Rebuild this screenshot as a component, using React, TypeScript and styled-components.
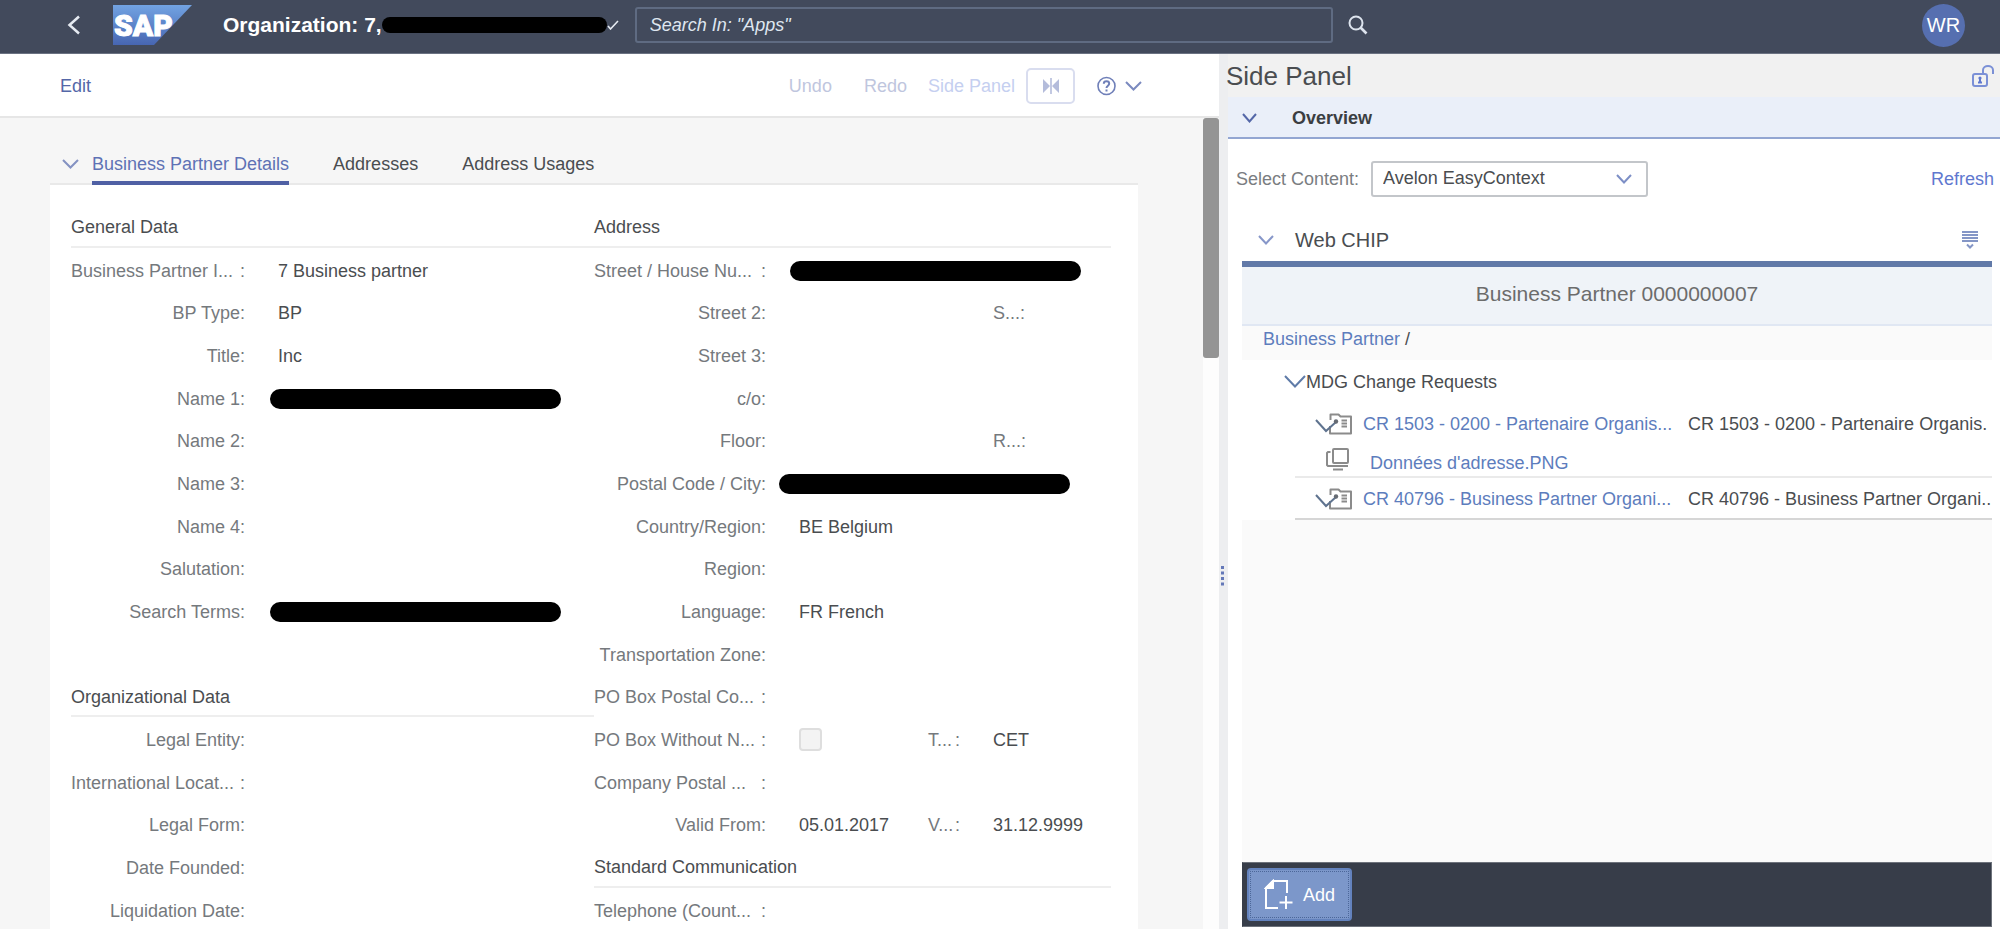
import React from "react";
import styled, { createGlobalStyle } from "styled-components";

const GlobalStyle = createGlobalStyle`
  * { box-sizing: border-box; }
  body {
    margin: 0;
    background: #ffffff;
    color: #4a4d50;
    font-family: "Liberation Sans", Arial, sans-serif;
    font-size: 18px;
    line-height: 22px;
  }
  button, input, select { font: inherit; color: inherit; }
  button { border: 0; padding: 0; background: none; cursor: pointer; }
  h1, h2, h3, p, ul { margin: 0; padding: 0; font-weight: 400; font-size: 18px; }
  ul { list-style: none; }
  svg { display: block; flex: none; }
`;

const Shell = styled.div`
  display: flex;
  flex-direction: column;
  height: 100vh;
  padding-bottom: 5px;
`;

/* Shell bar */

const ShellBar = styled.header`
  display: flex;
  align-items: center;
  flex: none;
  height: 54px;
  padding: 0 35px 3px 67px;
  background: #424a5c;
  border-bottom: 1px solid #6b7282;
  color: #ffffff;
`;

const BackButton = styled.button`
  margin-right: 32px;
`;

const PageTitle = styled.h1`
  display: flex;
  align-items: center;
  margin-left: 31px;
  font-size: 21px;
  font-weight: 700;
  white-space: nowrap;
`;

const Redaction = styled.span<{ $width: number; $height?: number }>`
  display: block;
  flex: none;
  width: ${(p) => p.$width}px;
  height: ${(p) => p.$height ?? 20}px;
  border-radius: 10px;
  background: #000000;
`;

const SearchInput = styled.input`
  flex: 0 1 698px;
  min-width: 120px;
  height: 36px;
  margin: 0 15px 0 16px;
  padding: 0 13px;
  border: 2px solid #5f6b82;
  border-radius: 3px;
  background: transparent;
  font-style: italic;
  &::placeholder { color: #dfe6f0; opacity: 1; }
`;

const Avatar = styled.button`
  width: 43px;
  height: 43px;
  margin-left: auto;
  border-radius: 50%;
  background: #566fb0;
  font-size: 20px;
`;

/* Two panes with the splitter between them */

const Panes = styled.div`
  display: grid;
  flex: 1;
  min-height: 0;
  grid-template-columns: minmax(0, 1219fr) 9px minmax(0, 772fr);
`;

const MainPane = styled.main`
  display: flex;
  flex-direction: column;
  min-height: 0;
`;

const Toolbar = styled.div`
  display: flex;
  align-items: center;
  flex: none;
  height: 64px;
  padding: 2px 77px 0 60px;
  border-bottom: 2px solid #e6e6e6;
`;

const ToolButton = styled.button<{ $tone: string; $gap?: number }>`
  margin-right: ${(p) => p.$gap ?? 0}px;
  color: ${(p) => p.$tone};
`;

const Spacer = styled.span`
  flex: 1;
`;

const BoxedIcon = styled.button`
  display: flex;
  align-items: center;
  justify-content: center;
  width: 49px;
  height: 36px;
  margin: 0 22px 0 11px;
  border: 2px solid #d9ddef;
  border-radius: 5px;
`;

const HelpButton = styled.button`
  display: flex;
  align-items: center;
  gap: 9px;
`;

const ScrollRow = styled.div`
  display: flex;
  flex: 1;
  min-height: 0;
`;

const Content = styled.div`
  flex: 1;
  min-width: 0;
  overflow: hidden;
  padding: 31px 65px 0 50px;
  background: #f6f6f6;
`;

const Track = styled.div`
  flex: none;
  width: 16px;
  background: #fdfdfd;
`;

const Thumb = styled.div`
  height: 240px;
  border-radius: 3px;
  background: #949494;
`;

const TabBar = styled.nav`
  display: flex;
  align-items: flex-end;
  height: 36px;
  padding-left: 12px;
  border-bottom: 2px solid #e9e9e9;
`;

const TabToggle = styled.button`
  margin-right: 13px;
  padding-bottom: 14px;
`;

const Tab = styled.a<{ $active?: boolean }>`
  height: 35px;
  margin: 0 44px -2px 0;
  padding-top: 3px;
  border-bottom: 4px solid ${(p) => (p.$active ? "#4f60a4" : "transparent")};
  color: ${(p) => (p.$active ? "#5e72b5" : "#4a4d50")};
  text-decoration: none;
  white-space: nowrap;
`;

const Card = styled.div`
  display: grid;
  grid-template-columns: minmax(0, 523fr) minmax(0, 517fr);
  padding: 20px 27px 0 21px;
  background: #ffffff;
`;

const FieldColumn = styled.section`
  display: grid;
  grid-template-rows: 44px;
  grid-auto-rows: 43px 42px 43px;
  align-content: start;
`;

const GroupTitle = styled.h2`
  display: flex;
  align-items: center;
  margin-bottom: 1px;
  padding-top: 2px;
  border-bottom: 2px solid #eeeeee;
`;

const FieldRow = styled.div<{ $four?: boolean }>`
  display: grid;
  grid-template-columns: ${(p) => (p.$four ? "172px 96px 32px 1fr" : "174px 1fr")};
  column-gap: 33px;
  align-items: center;
  white-space: nowrap;
`;

const FieldLabel = styled.label<{ $cut?: boolean }>`
  display: flex;
  justify-content: ${(p) => (p.$cut ? "space-between" : "flex-end")};
  color: #75797d;
`;

const LastLabel = styled(FieldLabel)`
  grid-column: 4;
  justify-content: flex-start;
`;

const WideValue = styled.div<{ $shift: number }>`
  grid-column: 2 / -1;
  margin-left: -${(p) => p.$shift}px;
`;

const CheckBox = styled.input`
  appearance: none;
  width: 23px;
  height: 23px;
  margin: 0;
  border: 2px solid #dedede;
  border-radius: 4px;
  background: #f3f3f3;
`;

const Splitter = styled.div`
  display: flex;
  align-items: center;
  padding-top: 168px;
  background: #edeef0;
`;

/* Side panel */

const SidePane = styled.aside`
  display: flex;
  flex-direction: column;
  min-height: 0;
`;

const SideHeader = styled.div`
  display: flex;
  align-items: center;
  justify-content: space-between;
  flex: none;
  height: 43px;
  padding-right: 6px;
  background: #f1f1f1;
`;

const SideTitle = styled.h2`
  margin-left: -2px;
  font-size: 26px;
  line-height: 30px;
  color: #4a4d50;
`;

const OverviewBar = styled.div`
  display: flex;
  align-items: center;
  flex: none;
  gap: 35px;
  height: 42px;
  padding: 2px 0 0 14px;
  border-bottom: 2px solid #93a6d2;
  background: #eaeff9;
`;

const OverviewTitle = styled.h3`
  font-weight: 700;
  color: #3b3e42;
`;

const ContentPicker = styled.div`
  display: flex;
  align-items: center;
  flex: none;
  height: 80px;
  padding: 0 6px 0 8px;
  color: #7a7d81;
`;

const SelectBox = styled.div`
  display: grid;
  align-items: center;
  width: 277px;
  margin-left: 12px;
  > * { grid-area: 1 / 1; }
  > svg { justify-self: end; margin-right: 16px; pointer-events: none; }
`;

const Select = styled.select`
  appearance: none;
  width: 100%;
  height: 36px;
  padding: 0 36px 2px 10px;
  border: 2px solid #c3c6ca;
  border-radius: 3px;
  background: #ffffff;
  color: #4a4d50;
`;

const Refresh = styled.button`
  margin-left: auto;
  color: #5f78cf;
`;

const Chip = styled.section`
  display: flex;
  flex-direction: column;
  flex: 1;
  min-height: 0;
  margin: 0 8px 2px 14px;
`;

const ChipHeader = styled.div`
  display: flex;
  align-items: center;
  flex: none;
  height: 48px;
  padding: 0 14px 0 16px;
  border-bottom: 6px solid #6179a8;
`;

const ChipTitle = styled.h3`
  margin-left: 21px;
  font-size: 20px;
`;

const PartnerBanner = styled.p`
  flex: none;
  height: 59px;
  padding-top: 16px;
  border-bottom: 2px solid #e0e7f3;
  background: #eff3f8;
  color: #6c6c6c;
  font-size: 21px;
  text-align: center;
`;

const Breadcrumb = styled.nav`
  flex: none;
  height: 34px;
  padding: 2px 21px;
  background: #fafafa;
`;

const Link = styled.a`
  color: #5d7dbd;
  text-decoration: none;
`;

const Tree = styled.div`
  flex: none;
  padding: 9px 0 0 21px;
  overflow: hidden;
  white-space: nowrap;
`;

const TreeTitle = styled.h3`
  display: flex;
  align-items: center;
  height: 25px;
  margin-bottom: 9px;
  padding-left: 21px;
`;

const TreeItem = styled.li<{ $tone: string }>`
  margin-left: 32px;
  padding: 5px 0 4px;
  border-bottom: 2px solid ${(p) => p.$tone};
`;

const RequestLine = styled.div`
  display: grid;
  grid-template-columns: 68px 314px 1fr;
  align-items: center;
  height: 31px;
`;

const RequestIcons = styled.span`
  padding-left: 20px;
`;

const RequestText = styled.span`
  padding-left: 11px;
`;

const FileLine = styled.div`
  display: flex;
  align-items: center;
  gap: 21px;
  height: 33px;
  padding: 14px 0 0 31px;
`;

const Rest = styled.div`
  flex: 1;
  background: #fafafa;
`;

const Footer = styled.footer`
  flex: none;
  padding: 5px 4px;
  border: 1px solid #6d727b;
  border-left-color: #373d49;
  background: #373d49;
`;

const AddButton = styled.button`
  display: flex;
  align-items: center;
  gap: 10px;
  height: 53px;
  padding: 0 15px;
  border: 2px solid #6382bd;
  border-radius: 4px;
  outline: 1px dotted #4c6799;
  outline-offset: -4px;
  background: #7c97ca;
  color: #ffffff;
`;

type ChevronProps = { w: number; h: number; color: string };

const Chevron = ({ w, h, color }: ChevronProps) => (
  <svg width={w} height={h} viewBox={`0 0 ${w} ${h}`} fill="none" stroke={color} strokeWidth="2">
    <path d={`M1 1 L${w / 2} ${h - 1.5} L${w - 1} 1`} />
  </svg>
);

const SapLogo = () => (
  <svg width="79" height="40" viewBox="0 0 79 40" role="img" aria-label="SAP">
    <defs>
      <linearGradient id="sap" x1="0" y1="0" x2="0" y2="1">
        <stop offset="0" stopColor="#72a3e2" />
        <stop offset="1" stopColor="#4766b2" />
      </linearGradient>
    </defs>
    <path d="M0 0H79L41 40H0Z" fill="url(#sap)" />
    <text x="1" y="31" fontFamily="Roboto" fontSize="30" fontWeight="900" fill="#ffffff" stroke="#ffffff" strokeWidth="1">
      SAP
    </text>
  </svg>
);

const RequestIcon = () => (
  <svg width="38" height="22" viewBox="0 0 38 22" fill="none">
    <path d="M15 13V20.500H36V3.500H25.500L23.500 1.500H15.500V7" stroke="#8b8b8b" strokeWidth="2" strokeLinejoin="round" />
    <path d="M26.500 7.500H32M26.500 10.500H32M26.500 13.500H32" stroke="#8b8b8b" strokeWidth="1.800" />
    <path d="M1 7L11 18L21 9" stroke="#5f738f" strokeWidth="2" />
    <circle cx="21" cy="8.500" r="2.200" fill="#666b73" />
  </svg>
);

const FileIcon = () => (
  <svg width="23" height="30" viewBox="0 0 23 30" fill="none" stroke="#8b8b8b" strokeWidth="2">
    <rect x="7" y="1" width="15" height="14" rx="1" />
    <path d="M4.500 4H2L1 5V17L2 18H22" />
    <path d="M7 21.500H17" />
  </svg>
);

type Field = {
  label?: string;
  cut?: boolean;
  value?: string;
  mask?: number;
  check?: boolean;
  second?: string;
  secondValue?: string;
  last?: string;
  title?: string;
};

const generalFields: Field[] = [
  { title: "General Data" },
  { label: "Business Partner I...", cut: true, value: "7 Business partner" },
  { label: "BP Type", value: "BP" },
  { label: "Title", value: "Inc" },
  { label: "Name 1", mask: 8 },
  { label: "Name 2" },
  { label: "Name 3" },
  { label: "Name 4" },
  { label: "Salutation" },
  { label: "Search Terms", mask: 8 },
  {},
  { title: "Organizational Data" },
  { label: "Legal Entity" },
  { label: "International Locat...", cut: true },
  { label: "Legal Form" },
  { label: "Date Founded" },
  { label: "Liquidation Date" },
];

const addressFields: Field[] = [
  { title: "Address" },
  { label: "Street / House Nu...", cut: true, mask: 9 },
  { label: "Street 2", last: "S...:" },
  { label: "Street 3" },
  { label: "c/o" },
  { label: "Floor", last: "R...:" },
  { label: "Postal Code / City", mask: 20 },
  { label: "Country/Region", value: "BE Belgium" },
  { label: "Region" },
  { label: "Language", value: "FR French" },
  { label: "Transportation Zone" },
  { label: "PO Box Postal Co...", cut: true },
  { label: "PO Box Without N...", cut: true, check: true, second: "T...", secondValue: "CET" },
  { label: "Company Postal ...", cut: true },
  { label: "Valid From", value: "05.01.2017", second: "V...", secondValue: "31.12.9999" },
  { title: "Standard Communication" },
  { label: "Telephone (Count...", cut: true },
];

const Fields = ({ items, four }: { items: Field[]; four?: boolean }) => (
  <FieldColumn>
    {items.map((f, i) =>
      f.title ? (
        <GroupTitle key={i}>{f.title}</GroupTitle>
      ) : (
        <FieldRow key={i} $four={four}>
          {f.label && (
            <FieldLabel $cut={f.cut} htmlFor={f.check ? "po-box" : undefined}>
              <span>{f.label}</span>
              <span>:</span>
            </FieldLabel>
          )}
          {f.value && <span>{f.value}</span>}
          {f.check && <CheckBox type="checkbox" id="po-box" disabled />}
          {f.mask && (
            <WideValue $shift={f.mask}>
              <Redaction $width={291} />
            </WideValue>
          )}
          {f.second && (
            <FieldLabel $cut>
              <span>{f.second}</span>
              <span>:</span>
            </FieldLabel>
          )}
          {f.secondValue && <span>{f.secondValue}</span>}
          {f.last && <LastLabel>{f.last}</LastLabel>}
        </FieldRow>
      ),
    )}
  </FieldColumn>
);

export default function App() {
  return (
    <Shell>
      <GlobalStyle />
      <ShellBar>
        <BackButton aria-label="Back">
          <svg width="14" height="20" viewBox="0 0 14 20" fill="none" stroke="#e6ebf2" strokeWidth="2.500">
            <path d="M12 1.500L2.500 10L12 18.500" />
          </svg>
        </BackButton>
        <SapLogo />
        <PageTitle>
          Organization: 7,
          <Redaction $width={225} $height={16} />
          <svg width="12" height="10" viewBox="0 0 12 10" fill="none" stroke="#e6ebf2" strokeWidth="1.600">
            <path d="M1 6L3.500 9L11 1" />
          </svg>
        </PageTitle>
        <SearchInput aria-label="Search" placeholder={'Search In: "Apps"'} />
        <button aria-label="Start search">
          <svg width="20" height="20" viewBox="0 0 20 20" fill="none" stroke="#dde4ee" strokeWidth="2">
            <circle cx="8" cy="8" r="6.500" />
            <path d="M12.500 12.500L18.500 18.500" strokeWidth="2.600" />
          </svg>
        </button>
        <Avatar>WR</Avatar>
      </ShellBar>

      <Panes>
        <MainPane>
          <Toolbar>
            <ToolButton $tone="#5467a8">Edit</ToolButton>
            <Spacer />
            <ToolButton $tone="#bfc6de" $gap={32}>Undo</ToolButton>
            <ToolButton $tone="#bfc6de" $gap={21}>Redo</ToolButton>
            <ToolButton $tone="#c5cff0">Side Panel</ToolButton>
            <BoxedIcon aria-label="Toggle side panel">
              <svg width="18" height="16" viewBox="0 0 18 16" fill="#b4bcdb">
                <path d="M1 1L8 8L1 15ZM17 1L10 8L17 15ZM8.200 0H9.800V16H8.200Z" />
              </svg>
            </BoxedIcon>
            <HelpButton aria-label="Help">
              <svg width="19" height="20" viewBox="0 0 19 20" fill="none" stroke="#6f7fb8" strokeWidth="1.600">
                <circle cx="9.500" cy="10" r="8.500" />
                <path d="M6.800 7.800C6.800 4.500 12.200 4.500 12.200 7.800C12.200 9.600 9.500 9.800 9.500 12" strokeWidth="2" />
                <path d="M9.500 13.500V15.500" strokeWidth="2" />
              </svg>
              <Chevron w={17} h={10} color="#7b8abf" />
            </HelpButton>
          </Toolbar>
          <ScrollRow>
            <Content>
              <TabBar>
                <TabToggle aria-label="Collapse">
                  <Chevron w={17} h={10} color="#8492c2" />
                </TabToggle>
                <Tab href="#details" $active>Business Partner Details</Tab>
                <Tab href="#addresses">Addresses</Tab>
                <Tab href="#usages">Address Usages</Tab>
              </TabBar>
              <Card>
                <Fields items={generalFields} />
                <Fields items={addressFields} four />
              </Card>
            </Content>
            <Track>
              <Thumb />
            </Track>
          </ScrollRow>
        </MainPane>

        <Splitter>
          <svg width="6" height="20" viewBox="0 0 6 20" fill="#6478b8">
            <path d="M2 0H5V3H2ZM2 5.500H5V8.500H2ZM2 11H5V14H2ZM2 16.500H5V19.500H2Z" />
          </svg>
        </Splitter>

        <SidePane>
          <SideHeader>
            <SideTitle>Side Panel</SideTitle>
            <button aria-label="Unlock">
              <svg width="22" height="22" viewBox="0 0 22 22" fill="none" stroke="#7b90d6" strokeWidth="2">
                <rect x="1" y="9" width="14" height="12" rx="2" />
                <path d="M11 9V5C11 -0.300 21 -0.300 21 5V9" />
                <circle cx="8" cy="13" r="1.600" fill="#5f78cf" stroke="none" />
                <path d="M8 13V18M6 17.500H10" stroke="#5f78cf" />
              </svg>
            </button>
          </SideHeader>
          <OverviewBar>
            <Chevron w={15} h={10} color="#5467a8" />
            <OverviewTitle>Overview</OverviewTitle>
          </OverviewBar>
          <ContentPicker>
            <label htmlFor="content">Select Content:</label>
            <SelectBox>
              <Select id="content">
                <option>Avelon EasyContext</option>
              </Select>
              <Chevron w={16} h={10} color="#7d8fc6" />
            </SelectBox>
            <Refresh>Refresh</Refresh>
          </ContentPicker>
          <Chip>
            <ChipHeader>
              <Chevron w={16} h={10} color="#8797c9" />
              <ChipTitle>Web CHIP</ChipTitle>
              <Spacer />
              <button aria-label="Menu">
                <svg width="16" height="18" viewBox="0 0 16 18" fill="none" stroke="#8496c6" strokeWidth="2">
                  <path d="M0 1H16M0 4H16M0 7H16M0 10H16M5 13.500L8 16.500L11 13.500" />
                </svg>
              </button>
            </ChipHeader>
            <PartnerBanner>Business Partner 0000000007</PartnerBanner>
            <Breadcrumb>
              <Link href="#partner">Business Partner</Link> /
            </Breadcrumb>
            <Tree>
              <TreeTitle>
                <Chevron w={22} h={13} color="#5f7ba8" />
                MDG Change Requests
              </TreeTitle>
              <ul>
                <TreeItem $tone="#eaeaea">
                  <RequestLine>
                    <RequestIcons><RequestIcon /></RequestIcons>
                    <Link href="#cr1503">CR 1503 - 0200 - Partenaire Organis...</Link>
                    <RequestText>CR 1503 - 0200 - Partenaire Organis.</RequestText>
                  </RequestLine>
                  <FileLine>
                    <FileIcon />
                    <Link href="#file">Données d'adresse.PNG</Link>
                  </FileLine>
                </TreeItem>
                <TreeItem $tone="#d6d6d6">
                  <RequestLine>
                    <RequestIcons><RequestIcon /></RequestIcons>
                    <Link href="#cr40796">CR 40796 - Business Partner Organi...</Link>
                    <RequestText>CR 40796 - Business Partner Organi..</RequestText>
                  </RequestLine>
                </TreeItem>
              </ul>
            </Tree>
            <Rest />
            <Footer>
              <AddButton>
                <svg width="29" height="31" viewBox="0 0 29 31" fill="none" stroke="#ffffff" strokeWidth="2">
                  <path d="M14 29H2V9L9 2H23V14" />
                  <path d="M2 9L9 2V9Z" fill="#ffffff" />
                  <path d="M22 17V30M15.500 23.500H28.500" />
                </svg>
                Add
              </AddButton>
            </Footer>
          </Chip>
        </SidePane>
      </Panes>
    </Shell>
  );
}
